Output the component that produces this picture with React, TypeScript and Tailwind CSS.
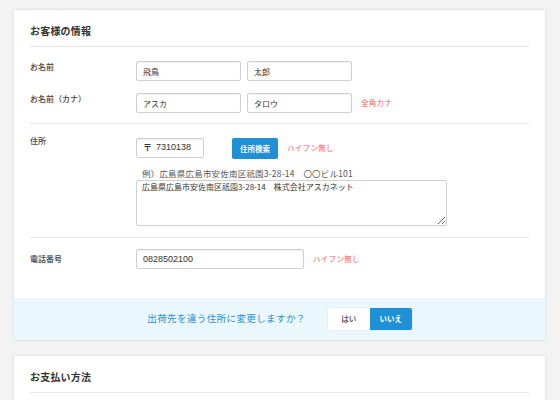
import React from 'react';

const font = { fontFamily: '"Noto Sans CJK JP", "Liberation Sans", sans-serif' };

const inputCls =
    'h-5 border border-[#cfcfcf] rounded-[2px] bg-white px-[6px] text-[8px] text-[#333] leading-none shadow-[inset_0_1px_1px_rgba(0,0,0,0.06)] outline-none';

const Label: React.FC<{ children: React.ReactNode; top?: string }> = ({ children, top = 'pt-[1px]' }) => (
    <div className={`w-[106px] shrink-0 text-[8px] leading-[10px] font-medium text-[#444] ${top}`}>{children}</div>
);

const Note: React.FC<{ children: React.ReactNode; className?: string }> = ({ children, className = '' }) => (
    <span className={`text-[7.5px] leading-none text-[#ff5a5f] tracking-[0.3px] ${className}`}>{children}</span>
);

export default function App() {
    return (
        <div className="w-[560px] h-[400px] overflow-hidden bg-[#f3f3f3] pl-[14px] pr-[15px] pt-[10px]" style={font}>
            {/* お客様の情報 */}
            <div className="bg-white shadow-[0_0_3px_rgba(0,0,0,0.12)]">
                <div className="px-4">
                    <div className="h-[37px] flex items-end pb-[10px] border-b border-[#e6e6e6]">
                        <h2 className="text-[10px] leading-none font-bold text-[#333] tracking-[0.2px]">お客様の情報</h2>
                    </div>

                    {/* 名前 */}
                    <div className="pt-[14px] pb-[10px] border-b border-[#e6e6e6] flex flex-col gap-3">
                        <div className="flex">
                            <Label top="pt-[1px]">お名前</Label>
                            <div className="flex gap-[6px]">
                                <input readOnly value="飛鳥" className={`${inputCls} w-[105px]`} />
                                <input readOnly value="太郎" className={`${inputCls} w-[105px]`} />
                            </div>
                        </div>
                        <div className="flex">
                            <Label top="pt-[1px]">お名前（カナ）</Label>
                            <div className="flex gap-[6px] items-center">
                                <input readOnly value="アスカ" className={`${inputCls} w-[105px]`} />
                                <input readOnly value="タロウ" className={`${inputCls} w-[105px]`} />
                                <Note className="ml-[3px]">全角カナ</Note>
                            </div>
                        </div>
                    </div>

                    {/* 住所 */}
                    <div className="pt-[12px] pb-[11px] border-b border-[#e6e6e6] flex">
                        <Label top="pt-0">住所</Label>
                        <div className="flex flex-col">
                            <div className="flex items-center">
                                <div className={`${inputCls} w-[68px] flex items-center gap-[4px]`}>
                                    <span className="text-[9px] font-bold text-[#333]">〒</span>
                                    <span className="text-[9px] text-[#333]" style={{ fontFamily: '"Liberation Sans", sans-serif' }}>7310138</span>
                                </div>
                                <button className="ml-[28px] mt-[2px] h-[21px] w-[46px] rounded-[2px] bg-[#1f8fd6] text-white text-[7.5px] font-bold leading-none">
                                    住所検索
                                </button>
                                <Note className="ml-[9px]">ハイフン無し</Note>
                            </div>
                            <div className="mt-[9px] pl-[6px] text-[8.5px] leading-[10px] text-[#555] tracking-[0.2px]">
                                例）広島県広島市安佐南区祇園3-28-14　〇〇ビル101
                            </div>
                            <textarea
                                readOnly
                                value="広島県広島市安佐南区祇園3-28-14　株式会社アスカネット"
                                className="mt-[2px] w-[311px] h-[46px] border border-[#cfcfcf] rounded-[2px] px-[5px] py-[1px] text-[8px] leading-[10px] text-[#333] outline-none"
                            />
                        </div>
                    </div>

                    {/* 電話番号 */}
                    <div className="pt-[11px] pb-[29px] flex">
                        <Label top="pt-[5px]">電話番号</Label>
                        <div className="flex items-center">
                            <input
                                readOnly
                                value="0828502100"
                                className={`${inputCls} w-[168px] text-[9px]`}
                                style={{ fontFamily: '"Liberation Sans", sans-serif' }}
                            />
                            <Note className="ml-[9px]">ハイフン無し</Note>
                        </div>
                    </div>
                </div>

                {/* 出荷先 */}
                <div className="h-[42px] bg-[#eaf7fd] flex items-center justify-center gap-[22px]">
                    <span className="text-[9.5px] leading-none text-[#1f8fd6] tracking-[0.4px]">
                        出荷先を違う住所に変更しますか？
                    </span>
                    <div className="flex h-[22px] rounded-[2px] shadow-[0_0_1px_rgba(0,0,0,0.25)] overflow-hidden">
                        <button className="w-[42px] bg-white text-[7.5px] font-bold text-[#666]">はい</button>
                        <button className="w-[42px] bg-[#1f8fd6] text-[7.5px] font-bold text-white">いいえ</button>
                    </div>
                </div>
            </div>

            {/* お支払い方法 */}
            <div className="mt-4 bg-white shadow-[0_0_3px_rgba(0,0,0,0.12)] px-4 h-[60px]">
                <div className="h-[37px] flex items-end pb-[10px] border-b border-[#e6e6e6]">
                    <h2 className="text-[10px] leading-none font-bold text-[#333] tracking-[0.2px]">お支払い方法</h2>
                </div>
            </div>
        </div>
    );
}
